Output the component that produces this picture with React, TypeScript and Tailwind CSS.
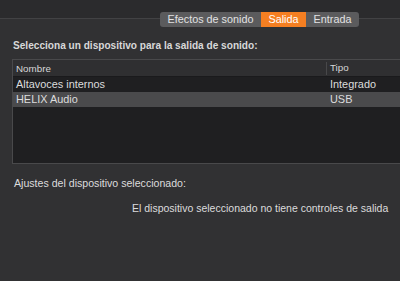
const font = { fontFamily: '"Helvetica Neue", "Liberation Sans", Arial, sans-serif' };

const devices = [
  { name: "Altavoces internos", type: "Integrado", selected: false },
  { name: "HELIX Audio", type: "USB", selected: true },
];

function Tabs() {
  return (
    <div className="absolute left-[160px] top-[12px] flex h-[15px] overflow-hidden rounded-[3px] bg-[#5b5b5d] text-[10.8px] leading-[15px] text-[#e2e2e3]">
      <div className="w-[101px] text-center">Efectos de sonido</div>
      <div className="w-[45px] bg-[#f57f22] text-center text-white">Salida</div>
      <div className="w-[53px] text-center">Entrada</div>
    </div>
  );
}

export default function App() {
  return (
    <div
      className="relative flex h-[281px] w-[400px] flex-col overflow-hidden bg-[#2b2b2d] text-[#dcdcdd]"
      style={font}
    >
      <div className="h-[18px] shrink-0" />
      <div className="flex flex-1 flex-col border-t border-[#424244] bg-[#313133] pl-[12px]">
        <h2 className="ml-[1px] mt-[20px] whitespace-nowrap text-[10.1px] font-bold leading-[13px] text-[#d8d8d9]">
          Selecciona un dispositivo para la salida de sonido:
        </h2>
        <div className="mt-[7px] flex h-[105px] w-[400px] flex-col border border-[#49494b] bg-[#1f1f21] text-[10.9px]">
          <div className="flex h-[17px] shrink-0 items-center border-b border-[#1a1a1c] bg-[#2f2f31] text-[9.8px] font-medium text-[#d6d6d7]">
            <div className="w-[314px] border-r border-[#48484a] pl-[3px] leading-[13px]">Nombre</div>
            <div className="pl-[3px]">Tipo</div>
          </div>
          {devices.map((d) => (
            <div
              key={d.name}
              className={`flex h-[15px] items-center leading-[15px] ${d.selected ? "bg-[#4a4a4c]" : "bg-[#1f1f21]"}`}
            >
              <div className="w-[315px] pl-[3px]">{d.name}</div>
              <div className="pl-[2px]">{d.type}</div>
            </div>
          ))}
        </div>
        <p className="ml-[2px] mt-[13px] whitespace-nowrap text-[10.6px] leading-[13px]">
          Ajustes del dispositivo seleccionado:
        </p>
        <p className="ml-[120px] mt-[12px] whitespace-nowrap text-[10.5px] leading-[13px]">
          El dispositivo seleccionado no tiene controles de salida
        </p>
      </div>
      <Tabs />
    </div>
  );
}
